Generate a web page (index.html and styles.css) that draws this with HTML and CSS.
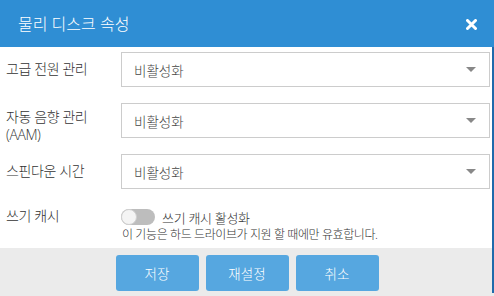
FILE: index.html
```html
<!DOCTYPE html>
<html lang="ko">
<head>
<meta charset="utf-8">
<link rel="stylesheet" href="styles.css">
</head>
<body>
<div class="dialog">
  <div class="header">
    <span class="title">물리 디스크 속성</span>
    <svg class="close" width="11" height="11" viewBox="0 0 11 11"><path d="M1.5 1.5 L9.5 9.5 M9.5 1.5 L1.5 9.5" stroke="#fff" stroke-width="3" stroke-linecap="round"/></svg>
  </div>
  <div class="content">
    <div class="row">
      <div class="label">고급 전원 관리</div>
      <div class="select"><span>비활성화</span><i class="caret"></i></div>
    </div>
    <div class="row">
      <div class="label label-two">자동 음향 관리<br>(AAM)</div>
      <div class="select"><span>비활성화</span><i class="caret"></i></div>
    </div>
    <div class="row">
      <div class="label">스핀다운 시간</div>
      <div class="select"><span>비활성화</span><i class="caret"></i></div>
    </div>
    <div class="row row-cache">
      <div class="label label-cache">쓰기 캐시</div>
      <div class="cache">
        <div class="toggle-line"><span class="toggle"><span class="knob"></span></span><span class="toggle-text">쓰기 캐시 활성화</span></div>
        <div class="note">이 기능은 하드 드라이브가 지원 할 때에만 유효합니다.</div>
      </div>
    </div>
  </div>
  <div class="footer">
    <button class="btn">저장</button>
    <button class="btn">재설정</button>
    <button class="btn">취소</button>
  </div>
</div>
</body>
</html>
```
FILE: styles.css
```css
* { box-sizing: border-box; }
html, body { margin: 0; padding: 0; }
body {
  width: 494px;
  height: 296px;
  overflow: hidden;
  font-family: "Open Sans", "Noto Sans CJK KR", sans-serif;
  font-weight: 300;
  color: #333;
  background: #ebebeb;
}
.header {
  height: 47px;
  background: #2f8ed4;
  display: flex;
  align-items: center;
  justify-content: space-between;
  padding: 0 17px 0 18px;
}
.title {
  color: #fff;
  font-size: 16px;
  line-height: 20px;
}
.close { display: block; margin-top: 1px; }
.content {
  background: #fff;
  border-right: 2px solid #1f6aab;
  padding: 5px 2px 4px 6px;
  display: flex;
  flex-direction: column;
  gap: 16px;
}
.row {
  display: flex;
  align-items: flex-start;
  height: 35px;
}
.label {
  width: 115px;
  flex: none;
  font-size: 14px;
  letter-spacing: -0.4px;
  line-height: 18px;
  padding-top: 8px;
  color: #333;
}
.label-two { padding-top: 5px; }
.select {
  flex: 1;
  height: 35px;
  border: 1px solid #cccccc;
  display: flex;
  align-items: center;
  justify-content: space-between;
  padding: 0 13px 0 12px;
  font-size: 13.5px;
  color: #444;
}
.caret {
  width: 0;
  height: 0;
  border-left: 5px solid transparent;
  border-right: 5px solid transparent;
  border-top: 5px solid #888;
}
.row-cache { margin-top: 4px; height: auto; }
.label-cache { padding-top: 0; line-height: 14px; }
.cache { display: flex; flex-direction: column; }
.toggle-line {
  display: flex;
  align-items: center;
  gap: 7px;
  height: 16px;
}
.toggle {
  position: relative;
  width: 34px;
  height: 16px;
  border-radius: 8px;
  background: #bdbdbd;
  flex: none;
}
.knob {
  position: absolute;
  left: 0;
  top: 0;
  width: 16px;
  height: 16px;
  border-radius: 50%;
  background: #f4f4f4;
  border: 1px solid #d0d0d0;
}
.toggle-text { font-size: 13px; letter-spacing: -0.3px; color: #333; }
.note {
  font-size: 12px;
  letter-spacing: -0.4px;
  line-height: 18px;
  margin-top: 1px;
  margin-left: 1px;
  color: #333;
}
.footer {
  height: 45px;
  background: #ebebeb;
  border-right: 2px solid #1f6aab;
  display: flex;
  justify-content: center;
  gap: 7px;
  padding: 7px 0 0 2px;
}
.btn {
  width: 83px;
  height: 36px;
  border: none;
  border-radius: 3px;
  background: #56a7e0;
  color: #fff;
  font-family: "Open Sans", "Noto Sans CJK KR", sans-serif;
  font-weight: 300;
  font-size: 13.5px;
  padding: 0;
}
```
